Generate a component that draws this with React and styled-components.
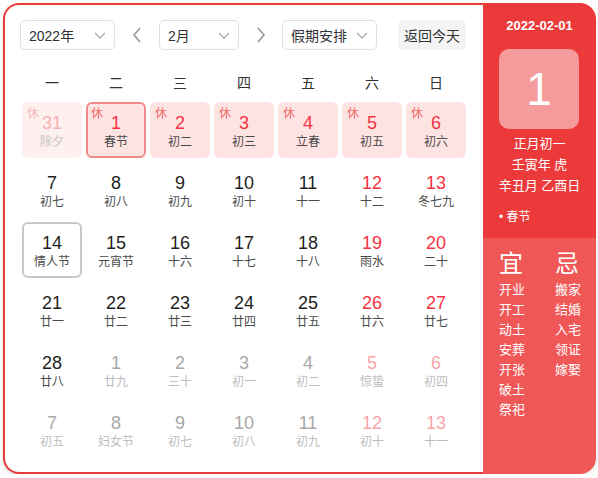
import React from "react";
import styled, { createGlobalStyle } from "styled-components";

const GlobalStyle = createGlobalStyle`
  html, body { margin: 0; padding: 0; background: #fff; }
  body { font-family: "Liberation Sans", "Noto Sans CJK SC", sans-serif; }
  * { box-sizing: border-box; }
`;

const Frame = styled.div`
  margin: 3px 0 0 3px;
  width: 593px;
  height: 471px;
  display: flex;
  border-radius: 16px;
  box-shadow: 0 2px 5px rgba(0, 0, 0, 0.12);
`;

const Main = styled.div`
  width: 480px;
  flex-shrink: 0;
  border: 2px solid #e8393b;
  border-right: none;
  border-radius: 16px 0 0 16px;
  padding: 15px 15px 0 15px;
  background: #fff;
`;

const Toolbar = styled.div`
  display: flex;
  align-items: center;
  height: 30px;
`;

const Select = styled.div`
  width: ${(p) => p.$w}px;
  height: 30px;
  border: 1px solid #dcdfe6;
  border-radius: 5px;
  display: flex;
  align-items: center;
  justify-content: space-between;
  padding: 0 8px 0 8px;
  font-size: 14px;
  color: #303133;
`;

const ArrowBtn = styled.div`
  width: ${(p) => p.$w}px;
  height: 30px;
  display: flex;
  align-items: center;
  justify-content: center;
`;

const TodayBtn = styled.div`
  margin-left: 21px;
  width: 68px;
  height: 30px;
  border-radius: 5px;
  background: #f4f4f5;
  color: #303133;
  font-size: 14px;
  display: flex;
  align-items: center;
  justify-content: center;
`;

const Week = styled.div`
  margin: 12px 2px 0 2px;
  height: 40px;
  display: grid;
  grid-template-columns: repeat(7, 60px);
  column-gap: 4px;
  align-items: center;
`;

const WeekDay = styled.div`
  text-align: center;
  font-size: 14px;
  color: #303133;
`;

const Grid = styled.div`
  margin: 0 2px;
  display: grid;
  grid-template-columns: repeat(7, 60px);
  grid-auto-rows: 56px;
  gap: 4px;
`;

const Cell = styled.div`
  position: relative;
  border-radius: 6px;
  padding-top: ${(p) => (p.$bordered ? 8 : 10)}px;
  text-align: center;
  background: ${(p) => (p.$holiday ? (p.$other ? "#fff0f0" : "#fee3e3") : "transparent")};
  border: ${(p) =>
    p.$selected ? "2px solid #f28a8c" : p.$today ? "2px solid #c8c9cc" : "none"};
`;

const Num = styled.div`
  font-size: 18px;
  line-height: 22px;
  color: ${(p) => p.$c};
`;

const Lunar = styled.div`
  font-size: 12px;
  line-height: 16px;
  color: ${(p) => p.$c};
`;

const Rest = styled.span`
  position: absolute;
  top: ${(p) => (p.$bordered ? 4 : 6)}px;
  left: ${(p) => (p.$bordered ? 3 : 5)}px;
  font-size: 12px;
  line-height: 12px;
  color: ${(p) => (p.$other ? "#f8b9ba" : "#f3686e")};
`;

const Side = styled.div`
  width: 113px;
  flex-shrink: 0;
  border-radius: 0 16px 16px 0;
  overflow: hidden;
  display: flex;
  flex-direction: column;
  color: #fff;
`;

const SideTop = styled.div`
  background: #ec3a3a;
  padding: 14px 0 12px 16px;
  display: flex;
  flex-direction: column;
`;

const DateText = styled.div`
  margin-left: -16px;
  text-align: center;
  font-size: 13px;
  font-weight: bold;
  line-height: 18px;
`;

const BigDay = styled.div`
  margin: 14px 0 0 0;
  width: 80px;
  height: 80px;
  border-radius: 10px;
  background: #f59b9b;
  display: flex;
  align-items: center;
  justify-content: center;
  font-size: 46px;
  font-family: "Liberation Sans", sans-serif;
`;

const LunarInfo = styled.div`
  margin: 4px 0 0 -16px;
  text-align: center;
  font-size: 13px;
  line-height: 21px;
`;

const Festival = styled.div`
  margin-top: 12px;
  font-size: 12px;
  line-height: 18px;
`;

const SideBottom = styled.div`
  flex: 1;
  background: #f05757;
  padding: 12px 0 0 16px;
  display: flex;
`;

const Col = styled.div`
  width: ${(p) => (p.$w ? `${p.$w}px` : "auto")};
  flex-shrink: 0;
  display: flex;
  flex-direction: column;
`;

const ColHead = styled.div`
  font-size: 24px;
  line-height: 28px;
  margin-bottom: 2px;
`;

const Item = styled.div`
  font-size: 13px;
  line-height: 20px;
`;

const Chevron = () => (
  <svg width="12" height="7" viewBox="0 0 12 7">
    <polyline points="1,1 6,6 11,1" fill="none" stroke="#a8abb2" strokeWidth="1.3" />
  </svg>
);

const Arrow = ({ dir }) => (
  <svg width="10" height="16" viewBox="0 0 10 16">
    <polyline
      points={dir === "left" ? "8,1 2,8 8,15" : "2,1 8,8 2,15"}
      fill="none"
      stroke="#909399"
      strokeWidth="1.5"
    />
  </svg>
);

const weekdays = ["一", "二", "三", "四", "五", "六", "日"];

// [num, lunar, other, holiday]
const days = [
  ["31", "除夕", true, true],
  ["1", "春节", false, true],
  ["2", "初二", false, true],
  ["3", "初三", false, true],
  ["4", "立春", false, true],
  ["5", "初五", false, true],
  ["6", "初六", false, true],
  ["7", "初七"], ["8", "初八"], ["9", "初九"], ["10", "初十"], ["11", "十一"], ["12", "十二"], ["13", "冬七九"],
  ["14", "情人节"], ["15", "元宵节"], ["16", "十六"], ["17", "十七"], ["18", "十八"], ["19", "雨水"], ["20", "二十"],
  ["21", "廿一"], ["22", "廿二"], ["23", "廿三"], ["24", "廿四"], ["25", "廿五"], ["26", "廿六"], ["27", "廿七"],
  ["28", "廿八"], ["1", "廿九", true], ["2", "三十", true], ["3", "初一", true], ["4", "初二", true], ["5", "惊蛰", true], ["6", "初四", true],
  ["7", "初五", true], ["8", "妇女节", true], ["9", "初七", true], ["10", "初八", true], ["11", "初九", true], ["12", "初十", true], ["13", "十一", true],
];

const yi = ["开业", "开工", "动土", "安葬", "开张", "破土", "祭祀"];
const ji = ["搬家", "结婚", "入宅", "领证", "嫁娶"];

function numColor(weekend, other, holiday) {
  if (holiday && other) return "#f6b1b3";
  if (holiday) return "#f5333f";
  if (other) return weekend ? "#f7a6a8" : "#a8a8a8";
  return weekend ? "#f5333f" : "#1f1f1f";
}

function lunarColor(other) {
  return other ? "#bdbdbd" : "#4a4a4a";
}

export default function App() {
  return (
    <>
      <GlobalStyle />
      <Frame>
        <Main>
          <Toolbar>
            <Select $w={95}>
              <span>2022年</span>
              <Chevron />
            </Select>
            <ArrowBtn $w={44}>
              <Arrow dir="left" />
            </ArrowBtn>
            <Select $w={80}>
              <span>2月</span>
              <Chevron />
            </Select>
            <ArrowBtn $w={43}>
              <Arrow dir="right" />
            </ArrowBtn>
            <Select $w={95}>
              <span>假期安排</span>
              <Chevron />
            </Select>
            <TodayBtn>返回今天</TodayBtn>
          </Toolbar>
          <Week>
            {weekdays.map((w) => (
              <WeekDay key={w}>{w}</WeekDay>
            ))}
          </Week>
          <Grid>
            {days.map(([n, l, other, holiday], i) => {
              const weekend = i % 7 >= 5;
              const selected = i === 1;
              const today = i === 14;
              const bordered = selected || today;
              return (
                <Cell
                  key={i}
                  $holiday={holiday}
                  $other={other}
                  $selected={selected}
                  $today={today}
                  $bordered={bordered}
                >
                  {holiday && (
                    <Rest $other={other} $bordered={bordered}>
                      休
                    </Rest>
                  )}
                  <Num $c={numColor(weekend, other, holiday)}>{n}</Num>
                  <Lunar $c={holiday && other ? "#c4c4c4" : lunarColor(other)}>{l}</Lunar>
                </Cell>
              );
            })}
          </Grid>
        </Main>
        <Side>
          <SideTop>
            <DateText>2022-02-01</DateText>
            <BigDay>1</BigDay>
            <LunarInfo>
              <div>正月初一</div>
              <div>壬寅年 虎</div>
              <div>辛丑月 乙酉日</div>
            </LunarInfo>
            <Festival>• 春节</Festival>
          </SideTop>
          <SideBottom>
            <Col $w={56}>
              <ColHead>宜</ColHead>
              {yi.map((t) => (
                <Item key={t}>{t}</Item>
              ))}
            </Col>
            <Col>
              <ColHead>忌</ColHead>
              {ji.map((t) => (
                <Item key={t}>{t}</Item>
              ))}
            </Col>
          </SideBottom>
        </Side>
      </Frame>
    </>
  );
}
